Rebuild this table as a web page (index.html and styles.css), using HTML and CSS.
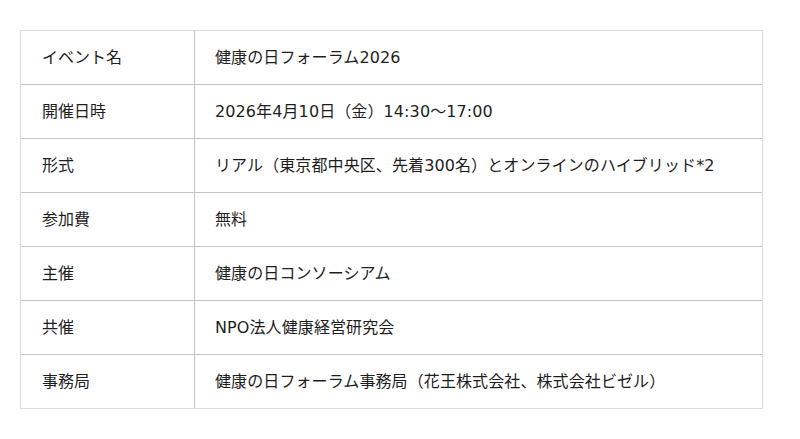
FILE: index.html
```html
<!DOCTYPE html>
<html lang="ja">
<head>
<meta charset="utf-8">
<link rel="stylesheet" href="styles.css">
</head>
<body>
<div class="info-table">
  <div class="row"><div class="label">イベント名</div><div class="value">健康の日フォーラム2026</div></div>
  <div class="row"><div class="label">開催日時</div><div class="value">2026年4月10日（金）14:30〜17:00</div></div>
  <div class="row"><div class="label">形式</div><div class="value">リアル（東京都中央区、先着300名）とオンラインのハイブリッド*2</div></div>
  <div class="row"><div class="label">参加費</div><div class="value">無料</div></div>
  <div class="row"><div class="label">主催</div><div class="value">健康の日コンソーシアム</div></div>
  <div class="row"><div class="label">共催</div><div class="value">NPO法人健康経営研究会</div></div>
  <div class="row"><div class="label">事務局</div><div class="value">健康の日フォーラム事務局（花王株式会社、株式会社ビゼル）</div></div>
</div>
</body>
</html>
```
FILE: styles.css
```css
html, body {
  margin: 0;
  padding: 0;
  background: #fff;
}
body {
  padding: 30px 0 0 20px;
  font-family: "DejaVu Sans", "Noto Sans CJK JP", sans-serif;
  font-size: 16px;
  color: #1e1e1e;
}
.info-table {
  width: 741px;
  border: 1px solid #dcdcdc;
}
.row {
  display: grid;
  grid-template-columns: 174px 1fr;
  height: 53px;
  border-top: 1px solid #c4c4c4;
}
.row:first-child {
  border-top: none;
}
.label, .value {
  display: flex;
  align-items: center;
  white-space: nowrap;
  padding-bottom: 3px;
  box-sizing: border-box;
}
.label {
  padding-left: 21px;
  border-right: 1px solid #c4c4c4;
}
.value {
  padding-left: 20px;
  letter-spacing: 0.1px;
}
```
